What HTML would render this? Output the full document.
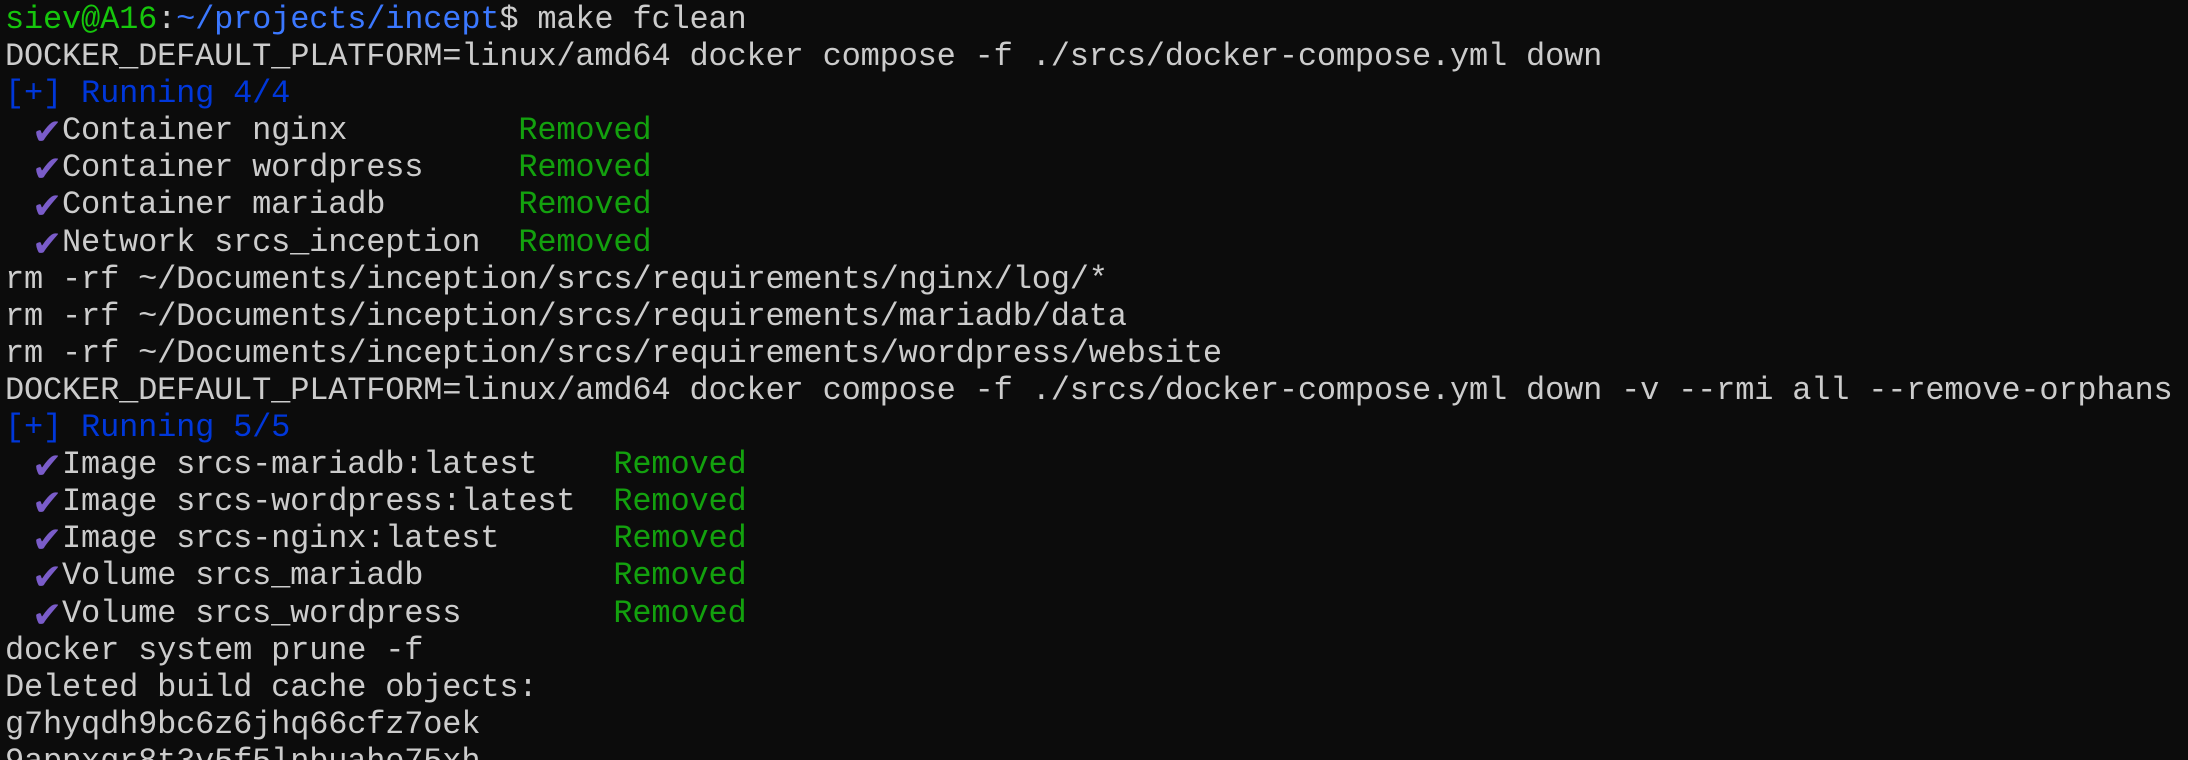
<!DOCTYPE html>
<html><head><meta charset="utf-8"><style>
html,body{margin:0;padding:0;background:#0c0c0c;width:2188px;height:760px;overflow:hidden}
.t{margin:0;padding:1px 0 0 5px;font-family:"Liberation Mono","DejaVu Sans Mono",monospace;font-size:32px;letter-spacing:-0.19px;color:#cccccc}
.t div{height:37.1px;line-height:37.1px;overflow:visible;white-space:pre}
.g{color:#16c60c}.b{color:#3b78ff}.r{color:#0037da}.ok{color:#13a10e}
.c{color:#7a5cc9;font-family:"DejaVu Sans",sans-serif;display:inline-block;width:38px;text-align:right;line-height:0;font-size:36px;font-weight:bold;vertical-align:baseline;position:relative;top:5px}
</style></head><body><div class="t"><div><span class="g">siev@A16</span>:<span class="b">~/projects/incept</span>$ make fclean</div><div>DOCKER_DEFAULT_PLATFORM=linux/amd64 docker compose -f ./srcs/docker-compose.yml down</div><div><span class="r">[+] Running 4/4</span></div><div> <span class="c">✔</span>Container nginx         <span class="ok">Removed</span></div><div> <span class="c">✔</span>Container wordpress     <span class="ok">Removed</span></div><div> <span class="c">✔</span>Container mariadb       <span class="ok">Removed</span></div><div> <span class="c">✔</span>Network srcs_inception  <span class="ok">Removed</span></div><div>rm -rf ~/Documents/inception/srcs/requirements/nginx/log/*</div><div>rm -rf ~/Documents/inception/srcs/requirements/mariadb/data</div><div>rm -rf ~/Documents/inception/srcs/requirements/wordpress/website</div><div>DOCKER_DEFAULT_PLATFORM=linux/amd64 docker compose -f ./srcs/docker-compose.yml down -v --rmi all --remove-orphans</div><div><span class="r">[+] Running 5/5</span></div><div> <span class="c">✔</span>Image srcs-mariadb:latest    <span class="ok">Removed</span></div><div> <span class="c">✔</span>Image srcs-wordpress:latest  <span class="ok">Removed</span></div><div> <span class="c">✔</span>Image srcs-nginx:latest      <span class="ok">Removed</span></div><div> <span class="c">✔</span>Volume srcs_mariadb          <span class="ok">Removed</span></div><div> <span class="c">✔</span>Volume srcs_wordpress        <span class="ok">Removed</span></div><div>docker system prune -f</div><div>Deleted build cache objects:</div><div>g7hyqdh9bc6z6jhq66cfz7oek</div><div>9appxgr8t3v5f5lnbuaho75xh</div></div></body></html>
